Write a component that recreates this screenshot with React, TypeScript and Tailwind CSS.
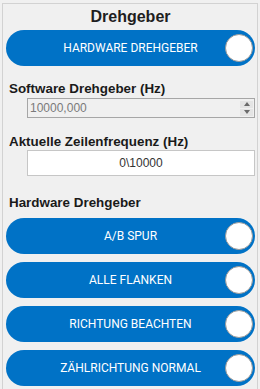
import React from 'react';

const toggles = ['A/B SPUR', 'ALLE FLANKEN', 'RICHTUNG BEACHTEN', 'ZÄHLRICHTUNG NORMAL'];

const Toggle: React.FC<{ label: string; className?: string }> = ({ label, className = '' }) => (
  <div
    className={`relative h-[36px] w-full rounded-full bg-[#0072c6] flex items-center justify-center ${className}`}
  >
    <span className="text-white text-[12px] font-['Roboto',sans-serif] leading-none">{label}</span>
    {/* knob */}
    <div className="absolute right-[2px] top-[4px] w-[28px] h-[28px] rounded-full bg-white border border-[#9a9a9a]" />
  </div>
);

export default function App() {
  return (
    <div className="w-[260px] h-[389px] bg-[#f0f0f0] overflow-hidden pt-[3px] px-[2px] font-['Liberation_Sans',Arial,sans-serif]">
      <div className="h-[400px] border-l border-t border-r border-[#d2d2d2] pl-[3px] pr-[2px] flex flex-col">
        <div className="mt-[3px] h-[20px] leading-[20px] text-center text-[16px] font-bold text-[#1e1e1e]">
          Drehgeber
        </div>

        <Toggle label="HARDWARE DREHGEBER" className="mt-[3px]" />

        <div className="mt-[15px] ml-[3px] h-[15px] leading-[15px] text-[13.4px] font-bold text-[#1a1a1a]">
          Software Drehgeber (Hz)
        </div>
        <div className="mt-[2px] ml-[21px] h-[20px] border border-[#a6a6a6] bg-[#f0f0f0] flex items-center">
          <span className="flex-1 pl-[2px] text-[12px] text-[#7a7a7a] leading-none">10000,000</span>
          <div className="w-[13px] h-[15px] mr-[1px] flex flex-col gap-[1px]">
            <div className="flex-1 bg-[#e4e4e4] flex items-center justify-center">
              <div className="w-0 h-0 border-l-[3.5px] border-r-[3.5px] border-b-[4px] border-l-transparent border-r-transparent border-b-[#6a6a6a]" />
            </div>
            <div className="flex-1 bg-[#e4e4e4] flex items-center justify-center">
              <div className="w-0 h-0 border-l-[3.5px] border-r-[3.5px] border-t-[4px] border-l-transparent border-r-transparent border-t-[#6a6a6a]" />
            </div>
          </div>
        </div>

        <div className="mt-[16px] ml-[3px] h-[15px] leading-[15px] text-[13.4px] font-bold text-[#1a1a1a]">
          Aktuelle Zeilenfrequenz (Hz)
        </div>
        <div className="mt-[1px] ml-[21px] h-[26px] border border-[#c6c6c6] bg-white flex items-center justify-center">
          <span className="text-[12px] text-[#333333] leading-none">0\10000</span>
        </div>

        <div className="mt-[19px] ml-[3px] h-[15px] leading-[15px] text-[13.4px] font-bold text-[#1a1a1a]">
          Hardware Drehgeber
        </div>

        <div className="mt-[8px] flex flex-col gap-[8px]">
          {toggles.map((t) => (
            <Toggle key={t} label={t} />
          ))}
        </div>
      </div>
    </div>
  );
}
